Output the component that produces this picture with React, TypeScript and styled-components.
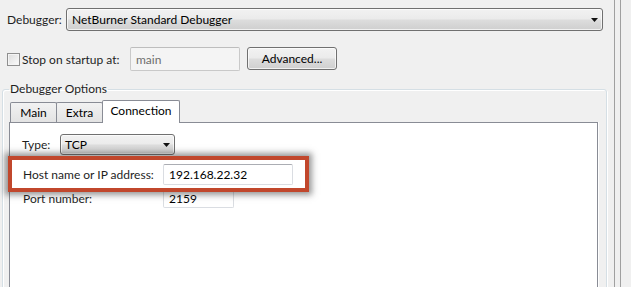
import * as React from 'react';
import styled, {createGlobalStyle} from 'styled-components';

const GlobalStyle = createGlobalStyle`
    html, body { margin: 0; padding: 0; background: #f0f0f0; }
    body { font-family: Lato, "Noto Sans", sans-serif; font-size: 12px; color: #1e1e1e; }
`;

const ArrowDown = () => (
    <svg width="7" height="4" viewBox="0 0 7 4"><path d="M0 0h7L3.5 4z" fill="#111" /></svg>
);

const App = () => {
    return (<>
        <GlobalStyle />
        <Page>
            <Main>
                <Row>
                    <Label $w={59}>Debugger:</Label>
                    <Combo $w={537} $h={23}>
                        <span>NetBurner Standard Debugger</span>
                        <ArrowDown />
                    </Combo>
                </Row>
                <Row $top={16}>
                    <Check />
                    <Label $w={108}>Stop on startup at:</Label>
                    <TextBox $w={110} $h={24} $disabled>main</TextBox>
                    <Button>Advanced...</Button>
                </Row>
                <Group>
                    <legend>Debugger Options</legend>
                    <TabStrip>
                        <Tab $w={47}>Main</Tab>
                        <Tab $w={47}>Extra</Tab>
                        <Tab $w={78} $active>Connection</Tab>
                    </TabStrip>
                    <Panel>
                        <Row>
                            <Label $w={38}>Type:</Label>
                            <Combo $w={115} $h={21} $pad={4}>
                                <span>TCP</span>
                                <ArrowDown />
                            </Combo>
                        </Row>
                        <Highlight>
                            <Label $w={140}>Host name or IP address:</Label>
                            <TextBox $w={130} $h={21}>192.168.22.32</TextBox>
                        </Highlight>
                        <Row $top={-4} $left={1}>
                            <Label $w={140}>Port number:</Label>
                            <TextBox $w={71} $h={20}>2159</TextBox>
                        </Row>
                    </Panel>
                </Group>
            </Main>
            <Sash />
        </Page>
    </>);
};

export default App;

const Page = styled.div`
    display: flex; width: 631px; height: 287px; overflow: hidden;
`;

const Main = styled.div`
    width: 614px; padding-top: 8px; box-sizing: border-box;
`;

const Sash = styled.div`
    width: 5px; height: 100%;
    border-left: 1px solid #a0a0a0; border-right: 1px solid #a0a0a0;
`;

const Row = styled.div<{$top?: number; $left?: number}>`
    display: flex; align-items: center;
    margin-top: ${p => p.$top ?? 0}px;
    padding-left: ${p => 7 + (p.$left ?? 0)}px;
`;

const Label = styled.span<{$w: number}>`
    width: ${p => p.$w}px; flex: none; white-space: nowrap;
`;

const Combo = styled.div<{$w: number; $h: number; $pad?: number}>`
    display: flex; align-items: center; justify-content: space-between;
    width: ${p => p.$w}px; height: ${p => p.$h}px; box-sizing: border-box;
    padding: 0 4px 0 ${p => p.$pad ?? 5}px;
    border: 1px solid #707070; border-radius: 3px;
    background: linear-gradient(#f2f2f2 0%, #ebebeb 48%, #dddddd 52%, #cfcfcf 100%);
    box-shadow: inset 0 0 0 1px rgba(255,255,255,0.7);
    color: #000;
`;

const Check = styled.span`
    width: 13px; height: 13px; box-sizing: border-box; flex: none; margin-right: 2px;
    border: 1px solid #8f8f8f;
    background: linear-gradient(135deg, #dcdcdc, #fbfbfb);
    box-shadow: inset 0 0 0 1px #f4f4f4;
`;

const TextBox = styled.div<{$w: number; $h: number; $disabled?: boolean}>`
    display: flex; align-items: center;
    width: ${p => p.$w}px; height: ${p => p.$h}px; box-sizing: border-box; padding-left: 5px;
    border: 1px solid ${p => p.$disabled ? '#c9c9c9' : '#dadde2'};
    border-top-color: ${p => p.$disabled ? '#bdbdbd' : '#abadb3'};
    border-radius: 2px;
    background: ${p => p.$disabled ? '#f4f4f4' : '#fff'};
    color: ${p => p.$disabled ? '#6d6d6d' : '#000'};
`;

const Button = styled.div`
    display: flex; align-items: center; justify-content: center;
    width: 90px; height: 23px; box-sizing: border-box; margin-left: 7px;
    border: 1px solid #707070; border-radius: 3px;
    background: linear-gradient(#f2f2f2 0%, #ebebeb 48%, #dddddd 52%, #cfcfcf 100%);
    box-shadow: inset 0 0 0 1px rgba(255,255,255,0.7);
    color: #000; margin-top: -1px;
`;

const Group = styled.fieldset`
    margin: 10px 0 0 2px; width: 605px; height: 240px; box-sizing: border-box;
    border: 1px solid #d5dfe5; border-radius: 3px; padding: 3px 8px 0 6px;
    box-shadow: inset 1px 1px 0 #fff, 1px 1px 0 #fff;
    legend { padding: 0 1px; margin-left: 0; line-height: 16px; color: #1e1e1e; }
`;

const TabStrip = styled.div`
    display: flex; align-items: flex-end; height: 22px; padding-left: 2px;
    position: relative; z-index: 1;
`;

const Tab = styled.div<{$w: number; $active?: boolean}>`
    display: flex; align-items: center; justify-content: center;
    width: ${p => p.$w}px; height: ${p => p.$active ? 23 : 20}px; box-sizing: border-box;
    border: 1px solid #898c95; border-bottom: none;
    margin-left: -1px; margin-bottom: ${p => p.$active ? -1 : 0}px;
    padding-bottom: ${p => p.$active ? 3 : 0}px;
    background: ${p => p.$active ? '#fff' : 'linear-gradient(#f2f2f2, #e3e3e3)'};
    border-radius: 2px 2px 0 0; color: #000;
`;

const Panel = styled.div`
    height: 200px; background: #fff; border: 1px solid #898c95;
    padding: 11px 0 0 5px; box-shadow: 1px 0 0 #fff;
`;

const Highlight = styled.div`
    display: flex; align-items: center; position: relative; z-index: 1;
    width: 301px; height: 36px; box-sizing: border-box; margin: 1px 0 0 -7px;
    border: 4px solid #c1472c; padding-left: 11px;
    box-shadow: 0 0 6px 3px rgba(50,50,50,0.5);
`;
